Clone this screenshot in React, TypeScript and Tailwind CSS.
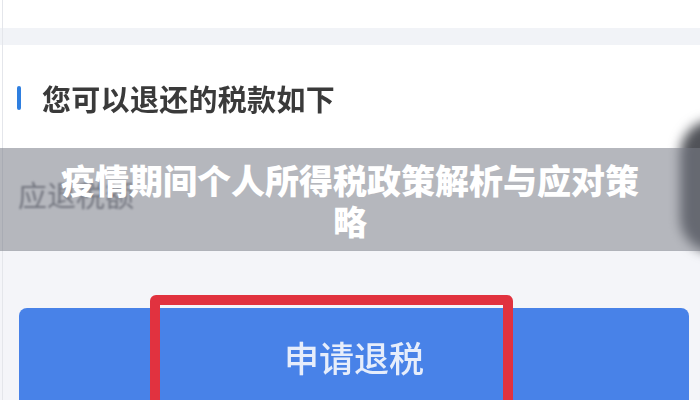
import React from "react";

const cjk = { fontFamily: '"Noto Sans CJK SC", "Noto Sans", sans-serif' };

export default function App() {
  return (
    <div className="relative w-[700px] h-[400px] overflow-hidden bg-white" style={cjk}>
      <div className="h-[28px] bg-white" />
      <div className="h-[17px] bg-[#f1f3f7]" />
      <div className="h-[205px] bg-white flex flex-col">
        <div className="flex items-center h-[104px] pl-[17px] pt-[2px]">
          <div className="w-[4px] h-[24px] rounded-full bg-[#2f7fe0]" />
          <span className="ml-[21px] text-[29px] tracking-[0.3px] leading-none text-[#3a3a3a] font-semibold blur-[0.4px]">
            您可以退还的税款如下
          </span>
        </div>
        <div className="flex items-center h-[92px] pl-[18px] pb-[2px]">
          <span className="text-[29px] leading-none text-[#6f7078] blur-[1.2px]">应退税额</span>
        </div>
      </div>
      <div className="h-[58px] bg-[#f4f5f9]" />
      <div className="h-[100px] bg-[#f4f5f9] pl-[19px] pr-[11px]">
        <div className="h-full rounded-lg bg-[#4882e8] flex items-start justify-center pt-[31px]">
          <span className="text-[35px] leading-none text-[#e6edfb] font-medium blur-[0.4px]">申请退税</span>
        </div>
      </div>

      <div className="absolute left-[2px] top-0 bottom-0 w-px bg-[#e4e6eb]" />
      <div className="absolute right-[-14px] top-[120px] w-[34px] h-[132px] rounded-l-full bg-[#505258] blur-[6px]" />

      <div className="absolute left-0 right-0 top-[148px] h-[103px] bg-[rgba(120,124,135,0.55)] flex items-center justify-center px-[55px]">
        <div className="text-center text-white font-black text-[34px] leading-[41px] pt-[1px]">
          疫情期间个人所得税政策解析与应对策略
        </div>
      </div>

      <div className="absolute left-[150px] top-[295px] w-[363px] h-[130px] border-[10px] border-[#e1323f] rounded-md" />
    </div>
  );
}
